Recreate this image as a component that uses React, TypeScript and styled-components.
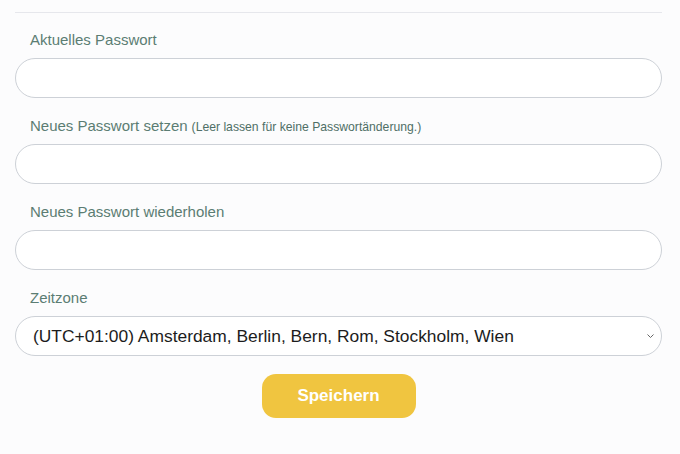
import styled, { createGlobalStyle } from 'styled-components';

const GlobalStyle = createGlobalStyle`
  body {
    margin: 0;
    background: #fcfcfd;
    font-family: "Liberation Sans", Arial, sans-serif;
  }
`;

const Page = styled.div`
  padding: 12px 18px 0 15px;
`;

const Divider = styled.hr`
  margin: 0;
  border: none;
  border-top: 1px solid #e6e7ec;
`;

const Form = styled.form`
  display: flex;
  flex-direction: column;
  gap: 19px;
  padding-top: 18px;
`;

const Field = styled.div`
  display: flex;
  flex-direction: column;
  gap: 9px;
`;

const Label = styled.label`
  display: flex;
  align-items: baseline;
  gap: 4px;
  height: 18px;
  margin-left: 15px;
  font-size: 15px;
  line-height: 18px;
  color: #5b7d73;

  small {
    font-size: 12.2px;
    line-height: 1;
    color: #4f6f66;
  }
`;

const Input = styled.input`
  box-sizing: border-box;
  width: 100%;
  height: 40px;
  padding: 0 18px;
  border: 1px solid #cdd1d7;
  border-radius: 20px;
  background: #fff;
  font-family: inherit;
  font-size: 17px;
  outline: none;
`;

const SelectWrap = styled.div`
  position: relative;
`;

const Select = styled.select`
  box-sizing: border-box;
  width: 100%;
  height: 40px;
  padding: 0 34px 0 17px;
  border: 1px solid #cdd1d7;
  border-radius: 20px;
  background: #fff;
  appearance: none;
  font-family: "Liberation Sans", Arial, sans-serif;
  font-size: 17.4px;
  color: #1c1c1c;
  outline: none;
`;

const Chevron = styled.svg`
  position: absolute;
  right: 8px;
  top: 18px;
  width: 7px;
  height: 4px;
  pointer-events: none;
`;

const Actions = styled.div`
  display: flex;
  justify-content: center;
  margin-top: -1px;
`;

const SaveButton = styled.button`
  width: 154px;
  height: 44px;
  border: none;
  border-radius: 14px;
  background: #f0c540;
  color: #fff;
  font-family: "Liberation Sans", Arial, sans-serif;
  font-size: 17px;
  font-weight: bold;
  cursor: pointer;
`;

const App = () => {
  return (
    <>
      <GlobalStyle />
      <Page>
        <Divider />
        <Form onSubmit={(e) => e.preventDefault()}>
          <Field>
            <Label>Aktuelles Passwort</Label>
            <Input type="password" />
          </Field>
          <Field>
            <Label>
              Neues Passwort setzen <small>(Leer lassen für keine Passwortänderung.)</small>
            </Label>
            <Input type="password" />
          </Field>
          <Field>
            <Label>Neues Passwort wiederholen</Label>
            <Input type="password" />
          </Field>
          <Field>
            <Label>Zeitzone</Label>
            <SelectWrap>
              <Select defaultValue="berlin">
                <option value="berlin">(UTC+01:00) Amsterdam, Berlin, Bern, Rom, Stockholm, Wien</option>
              </Select>
              <Chevron viewBox="0 0 7 4">
                <path d="M0.5 0.5 L3.5 3.5 L6.5 0.5" fill="none" stroke="#666" strokeWidth="1" />
              </Chevron>
            </SelectWrap>
          </Field>
          <Actions>
            <SaveButton type="submit">Speichern</SaveButton>
          </Actions>
        </Form>
      </Page>
    </>
  );
};

export default App;
